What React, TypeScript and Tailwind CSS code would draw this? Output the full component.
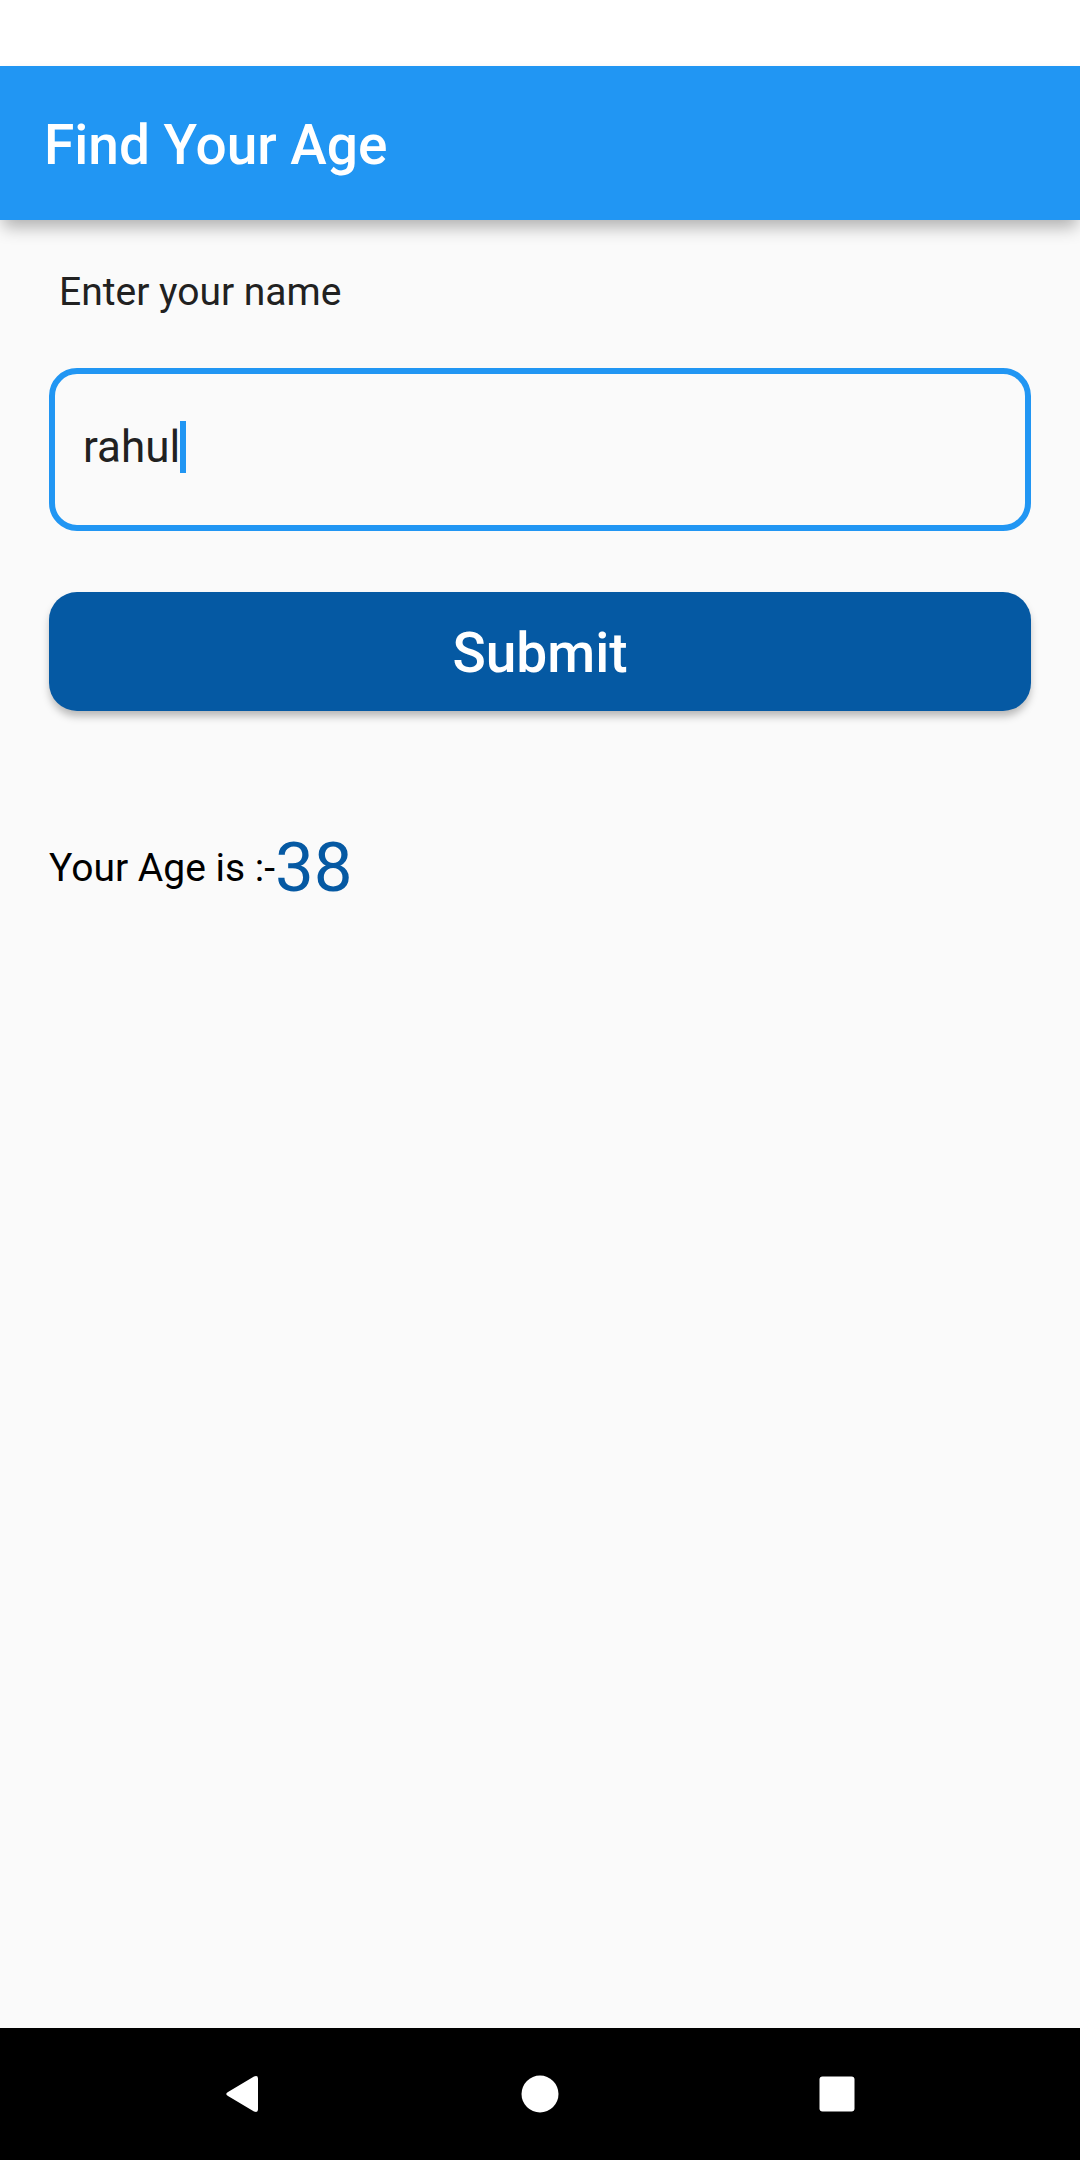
import { useState, type FormEvent } from "react";

function estimateAge(name: string): number {
  return name.trim().toLowerCase() === "rahul" ? 38 : 20 + ((name.length * 7) % 50);
}

function AppBar() {
  return (
    <header className="relative z-10 flex h-[154px] items-center bg-[#2196f3] px-11 pt-1 shadow-[0_10px_16px_-3px_rgba(0,0,0,0.3)]">
      <h1 className="text-[55px] font-medium leading-[64px] text-white">Find Your Age</h1>
    </header>
  );
}

function NavigationBar() {
  return (
    <nav aria-label="System navigation" className="flex h-[132px] justify-center bg-black text-white">
      <button type="button" aria-label="Back" className="flex w-[27.5%] items-center justify-center">
        <svg width="40" height="40" viewBox="0 0 40 40" aria-hidden="true">
          <path d="M5 18 L31 2.500 Q35 1 35 4.500 V35.500 Q35 39 31 37.500 L5 22 Q1.500 20 5 18Z" fill="currentColor" />
        </svg>
      </button>
      <button type="button" aria-label="Home" className="flex w-[27.5%] items-center justify-center">
        <svg width="40" height="40" viewBox="0 0 40 40" aria-hidden="true">
          <circle cx="20" cy="20" r="18.500" fill="currentColor" />
        </svg>
      </button>
      <button type="button" aria-label="Recent apps" className="flex w-[27.5%] items-center justify-center">
        <svg width="40" height="40" viewBox="0 0 40 40" aria-hidden="true">
          <rect x="2.500" y="2.500" width="35" height="35" rx="3" fill="currentColor" />
        </svg>
      </button>
    </nav>
  );
}

export default function App() {
  const [name, setName] = useState("rahul");
  const [age, setAge] = useState(38);

  const submit = (event: FormEvent) => {
    event.preventDefault();
    setAge(estimateAge(name));
  };

  return (
    <div className="flex min-h-screen flex-col bg-[#fafafa] font-[Roboto,sans-serif]">
      <div className="h-[66px] bg-white" />
      <AppBar />
      <main className="flex-1 px-[49px] pt-12">
        <form onSubmit={submit} className="flex flex-col">
          <label htmlFor="name" className="px-[10px] text-[39px] leading-[48px] text-[#212121]">
            Enter your name
          </label>
          <div className="mt-[52px] flex h-[163px] items-center rounded-[28px] border-6 border-[#2196f3] px-7 pb-[6px]">
            <input
              id="name"
              type="text"
              value={name}
              onChange={(event) => setName(event.target.value)}
              className="field-sizing-content max-w-full bg-transparent text-[44px] leading-[52px] text-[#212121] caret-transparent outline-none"
            />
            <span aria-hidden="true" className="h-[52px] w-[6px] shrink-0 bg-[#2196f3]" />
          </div>
          <button
            type="submit"
            className="mt-[61px] h-[119px] rounded-[28px] bg-[#0559a3] pt-[2px] text-[55px] font-medium leading-[64px] text-white shadow-[0_6px_8px_-1px_rgba(0,0,0,0.28)]"
          >
            Submit
          </button>
        </form>
        <p className="mt-[117px] flex items-center text-[39px] leading-[80px] text-black">
          Your Age is :-<output htmlFor="name" className="text-[69px] text-[#0559a3]">{age}</output>
        </p>
      </main>
      <NavigationBar />
    </div>
  );
}
